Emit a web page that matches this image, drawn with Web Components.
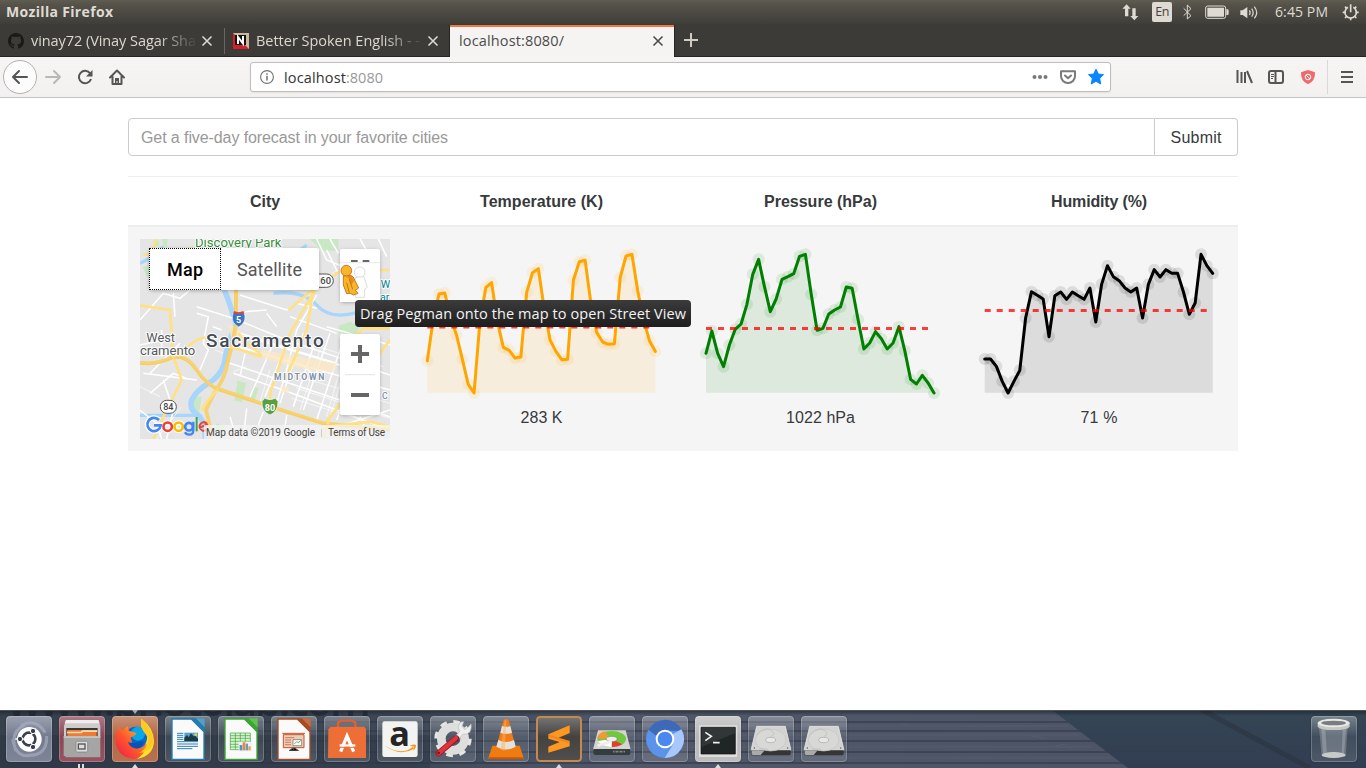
<!DOCTYPE html>
<html lang="en">
<head>
<meta charset="utf-8">
<title>localhost:8080/</title>
<style>
html,body{margin:0;height:100%;overflow:hidden;background:#fff}
</style>
</head>
<body>
<desk-top></desk-top>
<script>
function define(name, html, setup) {
  const tpl = document.createElement('template');
  tpl.innerHTML = html;
  customElements.define(name, class extends HTMLElement {
    constructor() {
      super();
      this.attachShadow({ mode: 'open' });
    }
    connectedCallback() {
      if (this.ready) return;
      this.ready = true;
      this.shadowRoot.append(tpl.content.cloneNode(true));
      if (setup) setup.call(this, this.shadowRoot);
    }
  });
}

/* A single line of text whose tracking is tuned to a given width. */
define('fit-text', `<style>:host{display:inline-block;white-space:pre;line-height:inherit}span{display:inline-block;white-space:pre}</style><span></span>`, function (root) {
  const s = root.querySelector('span');
  s.textContent = this.getAttribute('text');
  const want = +this.getAttribute('w');
  const have = s.getBoundingClientRect().width;
  s.style.letterSpacing = ((want - have) / (s.textContent.length - 1)).toFixed(3) + 'px';
  this.style.width = want + 'px';
});

/* ---------- system panel ---------- */
define('system-panel', `<style>
:host{display:flex;align-items:center;height:24px;padding:0 6px;background:linear-gradient(#5f5c50,#55524a 20%,#403e39);color:#dfdbd2;font:14.5px "Open Sans",sans-serif;box-sizing:border-box}
.t{font-weight:700;font-size:14px;line-height:22px;margin-top:-1px}
.r{margin-left:auto;display:flex;align-items:center;margin-right:-6px}
svg{display:block}
.en{width:20px;height:20px;border-radius:2px;background:#dfdbd2;color:#45433e;text-align:center;font:12.5px/20px "Open Sans",sans-serif;margin:0 9px 0 11px}
.c{margin:0 9px 0 14px;font-size:14px;line-height:22px}
</style>
<fit-text class="t" w="107" text="Mozilla Firefox"></fit-text>
<div class="r">
<svg width="20" height="24" viewBox="0 0 60 72" fill="#dfdbd2"><path d="M17 13 29 26H22V49H12V26H4ZM40 61 52 48H44V25H34V48H28Z"/></svg>
<div class="en"><fit-text w="14" text="En"></fit-text></div>
<svg width="13" height="24" viewBox="0 0 39 72" fill="none" stroke="#dfdbd2" stroke-width="3"><path d="M8 25 30 47 19 57V15L30 26 8 47"/></svg>
<svg width="26" height="24" viewBox="0 0 78 72" style="margin-left:10px"><rect x="5" y="18" width="60" height="37" rx="6" fill="none" stroke="#dfdbd2" stroke-width="3"/><path fill="#dfdbd2" d="M10 23H60V50H10ZM67 28h4q3 0 3 4v9q0 4-3 4h-4z"/></svg>
<svg width="22" height="24" viewBox="0 0 66 72" style="margin-left:9px" fill="none" stroke="#dfdbd2" stroke-width="3.5"><path fill="#dfdbd2" stroke="none" d="M4 31H11L25 21V55L11 45H4Z"/><path d="M31 31q5 7 0 14M38 26q9 12 0 24M46 20q14 18 0 35"/></svg>
<fit-text class="c" w="53" text="6:45 PM"></fit-text>
<svg width="26" height="24" viewBox="0 0 78 72" style="margin-right:3px" fill="none" stroke="#dfdbd2"><path stroke-width="5" d="M33 22A17 17 0 1 0 49 22M41 13V37"/><path stroke-width="5" d="M17 37h9M56 37h9M24 20l6 6M58 20l-6 6M24 54l6-6M58 54l-6-6M41 53v8"/></svg>
</div>`);

/* ---------- tabs ---------- */
define('tab-strip', `<style>
:host{display:flex;height:33px;padding-top:1px;box-sizing:border-box;background:#3c3b37;border-bottom:1px solid #262522;position:relative}
.tab{display:flex;align-items:center;width:225px;height:32px;box-sizing:border-box;color:#dcd8cf;font:14.5px/30px "Open Sans",sans-serif;position:relative;padding-left:8px}
.tab.sep{border-right:1px solid transparent;border-image:linear-gradient(transparent 4px,#69675f 4px,#69675f 28px,transparent 28px) 1}
.tab.on{width:226px;background:#f5f4f2;color:#4c4c4c;border:solid #262522;border-width:0 1px;margin-left:-1px;padding-left:9px;box-shadow:inset 0 2px #f07746}
.l{flex:1;white-space:nowrap;height:30px}
.f{-webkit-mask-image:linear-gradient(90deg,#000 76%,transparent 100%);mask-image:linear-gradient(90deg,#000 76%,transparent 100%)}
.i{margin-right:7px;flex:none}
.x{margin:0 11px 0 3px;stroke:currentColor;stroke-width:1.6;flex:none}
.p{margin:8px 0 0 9px}
</style>
<div class="tab sep"><svg class="i" width="16" height="16" viewBox="0 0 16 16"><path fill="#1b1a18" d="M8 0C3.58 0 0 3.58 0 8c0 3.54 2.29 6.53 5.47 7.59.4.07.55-.17.55-.38 0-.19-.01-.82-.01-1.49-2.01.37-2.53-.49-2.69-.94-.09-.23-.48-.94-.82-1.13-.28-.15-.68-.52-.01-.53.63-.01 1.08.58 1.23.82.72 1.21 1.87.87 2.33.66.07-.52.28-.87.51-1.07-1.78-.2-3.64-.89-3.64-3.95 0-.87.31-1.59.82-2.15-.08-.2-.36-1.02.08-2.12 0 0 .67-.21 2.2.82.64-.18 1.32-.27 2-.27s1.36.09 2 .27c1.53-1.04 2.2-.82 2.2-.82.44 1.1.16 1.92.08 2.12.51.56.82 1.27.82 2.15 0 3.07-1.87 3.75-3.65 3.95.29.25.54.73.54 1.48 0 1.07-.01 1.93-.01 2.2 0 .21.15.46.55.38A8.01 8.01 0 0 0 16 8c0-4.42-3.58-8-8-8z"/></svg>
<div class="l f"><fit-text w="165" text="vinay72 (Vinay Sagar Sha"></fit-text></div><svg class="x" width="12" height="12"><path d="M1.5 1.5 10.5 10.5M10.5 1.5 1.5 10.5"/></svg></div>
<div class="tab"><svg class="i" width="16" height="16" viewBox="0 0 16 16"><path fill="#cbb89c" d="M0 0H16V16H0Z"/><path fill="#d3202a" d="M0 0 16 16H0Z"/><path fill="#111" d="M2 2H13V12H2Z"/><path fill="none" stroke="#fff" stroke-width="2" d="M5 11V4L10 10.500V3"/></svg>
<div class="l f"><fit-text w="164" text="Better Spoken English - -"></fit-text></div><svg class="x" width="12" height="12"><path d="M1.500 1.500 10.500 10.500M10.500 1.500 1.500 10.500"/></svg></div>
<div class="tab on"><div class="l"><fit-text w="105" text="localhost:8080/"></fit-text></div><svg class="x" style="margin-right:10px" width="12" height="12"><path d="M1.500 1.500 10.500 10.500M10.500 1.500 1.500 10.500"/></svg></div>
<svg class="p" width="14" height="14"><path d="M7 0V14M0 7H14" stroke="#d0ccc3" stroke-width="2"/></svg>`);

/* ---------- navigation bar ---------- */
define('nav-bar', `<style>
:host{display:flex;align-items:center;height:41px;box-sizing:border-box;border-bottom:1px solid #c4c3c1;background:linear-gradient(#f6f5f4,#f2f1ef);padding:0 3px}
svg{display:block;flex:none}
.back{width:32px;height:32px;border:1px solid #b3b2b0;border-radius:50%;background:#fcfcfc;display:grid;place-items:center}
.url{margin-left:117px;width:861px;height:30px;box-sizing:border-box;border:1px solid #bfbebc;border-radius:3px;background:#fff;display:flex;align-items:center;box-shadow:0 1px 2px #0001;font:14.5px/29px "Open Sans",sans-serif;color:#333}
.g{color:#999}
.sp{flex:1}
.sep{width:1px;height:34px;background:#dad9d7;margin:0 3px}
</style>
<div class="back"><svg width="32" height="32" viewBox="0 0 32 32" fill="none" stroke="#555" stroke-width="2" stroke-linecap="round" stroke-linejoin="round"><path d="M23 16H9M15 10 9 16l6 6"/></svg></div>
<svg width="32" height="32" viewBox="0 0 32 32" fill="none" stroke="#b9b8b6" stroke-width="2" stroke-linecap="round" stroke-linejoin="round"><path d="M9 16H23M17 10 23 16l-6 6"/></svg>
<svg width="32" height="32" viewBox="0 0 32 32" fill="none" stroke="#555" stroke-width="2"><path d="M21.200 12.500A6.200 6.200 0 1 0 22 18"/><path d="M23.500 9V15.500H17Z" fill="#555" stroke="none"/></svg>
<svg width="32" height="32" viewBox="0 0 32 32"><path fill="none" stroke="#555" stroke-width="2" stroke-linecap="round" stroke-linejoin="round" d="M9 16.500 16 9.500 23 16.500M11.500 15.500V23H20.500V15.500"/><path fill="#555" d="M14 17h4v6h-1.500v-3h-1v3H14z"/></svg>
<div class="url">
<svg width="33" height="28" viewBox="0 0 33 28"><circle cx="16" cy="14" r="6.400" fill="none" stroke="#737373" stroke-width="1.100"/><path d="M16 12.800V17.500M16 10.300V11.700" stroke="#737373" stroke-width="1.500"/></svg>
<fit-text w="62" text="localhost"></fit-text><fit-text class="g" w="37" text=":8080"></fit-text><span class="sp"></span>
<svg width="28" height="28" fill="#777"><circle cx="8.500" cy="14" r="2"/><circle cx="14" cy="14" r="2"/><circle cx="19.500" cy="14" r="2"/></svg>
<svg width="28" height="28" fill="none" stroke="#7a7a7a" stroke-width="2" stroke-linejoin="round" stroke-linecap="round"><path d="M7 8.200H21V13A7 7 0 0 1 7 13Z"/><path d="M11 12.500 14 15.300 17 12.500"/></svg>
<svg width="28" height="28"><path fill="#0a84ff" stroke="#0a84ff" stroke-width="1" stroke-linejoin="round" d="M14 6.200 16.300 11 21.500 11.700 17.700 15.400 18.700 21 14 18.300 9.300 21 10.300 15.400 6.500 11.700 11.700 11Z"/></svg>
</div>
<span class="sp"></span>
<svg width="32" height="32" fill="none" stroke="#555" stroke-width="2"><path d="M9.500 9V22M13.500 11V22M17 11V22M19 10 24 22"/></svg>
<svg width="32" height="32" fill="none" stroke="#555" stroke-width="2"><rect x="9" y="10" width="14" height="12" rx="2"/><path d="M15.500 10V22"/><path stroke-width="1" d="M11 13.500h3M11 15.500h3M11 17.500h2"/></svg>
<svg width="32" height="32"><path fill="#f0696b" d="M16 9 23 11.200Q23.500 20 16 23.200Q8.500 20 9 11.200Z"/><circle cx="16" cy="16" r="2.800" fill="none" stroke="#fff" stroke-width="1"/><path d="M14 14l4 4" stroke="#fff"/></svg>
<div class="sep"></div>
<svg width="32" height="32" stroke="#555" stroke-width="2"><path d="M10 11H22M10 16H22M10 21H22"/></svg>`);

/* ---------- city map ---------- */
define('city-map', `<style>
:host{display:block;width:250px;height:200px;position:relative;font-family:Roboto,sans-serif}
.m{display:block;width:250px;height:200px}
.type{position:absolute;left:9px;top:9px;height:42px;display:flex;background:#fff;border-radius:2px;box-shadow:0 1px 4px -1px #0006;font-size:18px;line-height:43px}
.type div{box-sizing:border-box}
.on{width:72px;height:42px;border:1px dotted #000;padding-left:17px;font-weight:500;color:#000;line-height:41px}
.off{width:98px;padding-left:16px;color:#565656}
.fs,.zm{position:absolute;left:200px;width:40px;background:#fff;border-radius:2px;box-shadow:0 1px 4px -1px #0006}
.fs{top:10px;height:53px}
.zm{top:95px;height:81px}
.lg{position:absolute;right:0;bottom:0;height:14px;width:186px;background:#f5f5f5b8;font-size:10px;line-height:15px;color:#444;display:flex;justify-content:space-between;padding:0 5px 0 2px;box-sizing:border-box}
.lg i{width:1px;height:8px;margin:4px 0 0;background:#ccc}
text{font-family:Roboto,sans-serif}
</style>
<svg class="m" viewBox="30 27 750 600">
<rect x="30" y="27" width="750" height="600" fill="#e5e5e5"/>
<g fill="#c8e8c3"><path d="M38 110 58 108 60 138 50 140ZM70 32H88V48H74ZM96 27H112V50H100ZM560 45 540 27H625V62H575ZM625 288 660 275 690 290 680 310H625ZM322 452 348 458 336 516 314 512ZM370 470 386 474 374 512 360 510ZM192 500 215 500 205 565 185 545ZM260 580 285 590 280 612 252 602Z"/></g>
<path fill="none" stroke="#a8d5fb" stroke-width="16" d="M200 92Q270 150 285 185T318 285Q290 340 283 400Q270 440 235 460T185 510Q175 540 210 560Q228 590 225 627"/>
<path fill="none" stroke="#a8d5fb" stroke-width="10" d="M30 100 60 84 100 50M30 556H210M430 190Q520 180 560 225T680 248M470 80Q500 70 530 45"/>
<g fill="none" stroke="#fff" stroke-width="4.500"><path d="M30 270 100 190 150 205 180 180M60 490 130 430 170 445M110 627 130 540 100 450M95 300V380M200 250 235 260 220 340 235 360 210 420M248 290 275 300M200 230 310 265 470 330 780 435M330 195 470 240 500 220 560 235M560 195 500 300 470 420 440 520M325 350 600 430 780 480M330 310 620 400M300 400 420 440 780 560M345 370 330 440M430 340 360 500M470 340 405 500M520 310 450 520M560 320 490 530M600 310 520 540M640 330 560 570M680 390 620 570M380 330 640 408M310 430 460 480 780 600M480 260 620 310M590 60 625 130M590 290 780 345M640 585 780 540M650 600 700 627M690 560 720 627M350 535 340 627M470 555 460 627M400 545 385 585M300 560 320 627M40 430 200 450M30 540 80 580 95 627M560 27 590 90 640 110M600 27 625 70M690 27 715 70M745 27 770 80M635 310 650 350M510 400 560 440M30 345 100 330M60 430 150 340M130 190 135 260M410 250 440 290M345 245 410 240"/></g>
<g fill="none" stroke="#fff" stroke-width="2"><path d="M500 475 780 565M485 505 760 590M505 440 780 520M420 420 390 515M350 410 310 425M545 345 760 410M620 120 520 210M255 360 280 370M650 350 590 560M60 130 110 180M30 470 90 500M80 627 155 530M640 430 600 560M570 360 510 540"/></g>
<path fill="#fbe9c6" d="M395 360 620 400 610 425 540 420 395 385ZM295 285 320 290 340 320 305 330ZM455 470h22v18h-22z" opacity=".8"/>
<g fill="none" stroke="#f5d375" stroke-width="12" stroke-linejoin="round"><path d="M318 170V285L308 340 292 400Q285 440 265 470T228 540L240 590V627M30 398Q80 405 130 380Q170 375 200 420T265 477Q420 530 580 580L780 600"/></g>
<g fill="none" stroke="#ffe082" stroke-width="8" stroke-linejoin="round"><path d="M30 226 120 240 130 380 155 450 110 540 70 627M130 380 200 330 225 322M325 310 345 335 395 375M300 350 395 380M555 180 480 310 420 490 420 540M465 450 530 300 550 180 620 130 640 120M475 240 560 170M590 575 780 330M600 560 580 627M660 335 700 295H780M80 80Q60 60 80 27M40 75 190 55M600 600 640 627M590 590 720 575 780 590M740 120H780M215 540Q240 500 265 477"/></g>
<g fill="none" stroke="#f8c94e" stroke-width="2"><path d="M314 170V285L303 340 287 400M320 170V287M30 402Q80 409 130 384Q170 379 200 424T265 480Q420 534 580 583L780 603"/></g>
<g stroke="#fff" stroke-width="6" stroke-linejoin="round" paint-order="stroke">
<text x="195" y="51" font-size="37" fill="#388e3c" textLength="259" lengthAdjust="spacingAndGlyphs">Discovery Park</text>
<text x="228" y="350" font-size="57" fill="#434a54" font-weight="500" textLength="353">Sacramento</text>
<text x="49" y="335" font-size="37" fill="#54585c" textLength="86" lengthAdjust="spacingAndGlyphs">West</text>
<text x="30" y="375" font-size="37" fill="#54585c" textLength="166" lengthAdjust="spacingAndGlyphs">cramento</text>
<text x="432" y="449" font-size="26" fill="#8090a8" font-weight="700" textLength="151">MIDTOWN</text>
<text x="756" y="506" font-size="26" fill="#8090a8" font-weight="500">C</text><text x="752" y="174" font-size="32" fill="#00838f">W</text><text x="750" y="213" font-size="32" fill="#00838f">ar</text></g>
<g font-weight="500" text-anchor="middle"><rect x="540" y="132" width="70" height="40" rx="20" fill="#fff" stroke="#555" stroke-width="3"/><text x="587" y="162" font-size="28" fill="#444">60</text>
<rect x="91" y="511" width="48" height="39" rx="19" fill="#fff" stroke="#555" stroke-width="3"/><text x="115" y="540" font-size="27" fill="#444">84</text>
<path fill="#3d72c4" stroke="#fff" stroke-width="2" d="M307 257 312 245Q326 252 340 245L345 257Q347 280 326 291Q304 280 307 257Z"/><path fill="#d54542" d="M309 251 312 243Q326 250 340 243L343 251Z"/><text x="326" y="280" font-size="27" fill="#fff" font-weight="700">5</text>
<path fill="#5a9e42" stroke="#fff" stroke-width="2" d="M396 514 404 505Q420 513 436 505L444 514Q445 545 420 555Q394 545 396 514Z"/><text x="420" y="543" font-size="27" fill="#fff" font-weight="700">80</text></g>
<g fill="none" stroke-width="8"><g stroke="#fff" stroke-width="15"><circle cx="113" cy="590" r="12"/><circle cx="146" cy="590" r="12"/><path d="M87 570A20 20 0 1 0 92 585H72"/></g>
<path stroke="#4285f4" d="M87 570A20 20 0 1 0 92 586H72"/><circle cx="113" cy="590" r="12.500" stroke="#ea4335"/><circle cx="146" cy="590" r="12.500" stroke="#fbbc05"/><circle cx="177" cy="590" r="11.500" stroke="#4285f4"/><path stroke="#4285f4" stroke-width="7" d="M190 575V600Q190 614 178 614Q168 614 165 607"/><path stroke="#34a853" stroke-width="6" d="M200 561V604"/><path stroke="#ea4335" stroke-width="6" d="M209 593 231 584Q227 574 218 577Q207 582 209 593Q216 608 232 599"/></g>
</svg>
<div class="lg"><fit-text w="109" text="Map data ©2019 Google"></fit-text><i></i><fit-text w="57" text="Terms of Use"></fit-text></div>
<div class="type"><div class="on"><fit-text w="36" text="Map"></fit-text></div><div class="off"><fit-text w="65" text="Satellite"></fit-text></div></div>
<div class="fs"><svg width="40" height="53" viewBox="630 57 120 159"><path d="M663 93H683M698 93H718" stroke="#666" stroke-width="6"/><path d="M630 99H750V216H630Z" fill="#fff"/><path d="M630 98H750" stroke="#ddd" stroke-width="2"/><g fill="#fff" stroke="#dcdcdc" stroke-width="3"><circle cx="689" cy="127" r="16"/><path d="M677 142 702 140 712 172 704 177V202H677L670 165Z"/></g></svg></div>
<svg style="position:absolute;left:200px;top:24px" width="22" height="42" viewBox="630 99 66 126"><g stroke="#b56a19" stroke-width="2.500" fill="#f9b526"><path d="M640 137 662 136Q671 138 675 152L686 174 676 181 684 190 671 195 660 190 650 191 640 165Z"/><circle cx="649" cy="122" r="16"/><path fill="#e88a20" stroke="none" d="M642 138 665 137 672 153 664 164 656 144Z"/><path fill="none" d="M658 148 668 178M650 158 658 188"/></g></svg>
<div class="zm"><svg width="40" height="81" viewBox="0 0 120 243"><path d="M33 60H87M60 33V87M33 183H87" stroke="#666" stroke-width="12"/><path d="M15 122H105" stroke="#e4e4e4" stroke-width="3"/></svg></div>`);

/* ---------- sparkline ---------- */
define('spark-chart', `<style>
:host{display:flex;flex-direction:column;align-items:center;padding-top:4px;color:#373a3c}
svg{display:block}
.v{line-height:24px;margin-top:2px}
</style><svg width="250" height="161"></svg><div class="v"><slot></slot></div>`, function (root) {
  const color = this.getAttribute('color');
  const ys = this.getAttribute('points').split(' ').map(v => (v / 3 - 13));
  const step = 228 / 39;
  const left = +this.getAttribute('left');
  const pts = ys.map((y, i) => [(left + i * step).toFixed(2), y.toFixed(2)]);
  const line = pts.map(p => p.join(' ')).join(' ');
  const ref = this.getAttribute('mean') / 3 - 13;
  root.querySelector('svg').innerHTML =
    `<polygon points="${left} 149.700 ${line} ${left + 228} 149.700" fill="${color}" fill-opacity=".1"/>` +
    `<polyline points="${line}" fill="none" stroke="${color}" stroke-width="3" stroke-linecap="round" stroke-linejoin="round"/>` +
    `<g fill="${color}" fill-opacity=".1">${pts.map(p => `<circle cx="${p[0]}" cy="${p[1]}" r="6"/>`).join('')}</g>` +
    `<path d="M${left} ${ref}h228" stroke="red" stroke-opacity=".75" stroke-width="3" stroke-dasharray="6 6"/>`;
});

/* ---------- the page ---------- */
define('forecast-page', `<style>
:host{display:block;position:relative;width:1110px;margin:0 auto;padding-top:20px;font:16px/24px "Liberation Sans",Arial,sans-serif;color:#373a3c}
form{display:flex;height:38px;margin:0 0 20px}
.in{flex:1;box-sizing:border-box;border:1px solid #ccc;border-radius:4px 0 0 4px;padding:7px 12px 5px;color:#999}
.b{width:83px;box-sizing:border-box;border:1px solid #ccc;border-left:0;border-radius:0 4px 4px 0;padding:7px 0 5px;text-align:center}
.row{display:grid;grid-template-columns:274px 279px 279px 278px}
.h{border-top:1px solid #eceeef;border-bottom:2px solid #eceeef;height:46px;padding-top:2px;align-items:center;text-align:center;font-weight:700}
.d{background:#f5f5f5;height:224px}
city-map{margin:12px 0 0 12px}
spark-chart{margin-top:12px}
.tip{position:absolute;left:227px;top:202px;width:336px;height:27px;box-sizing:border-box;border-radius:4px;background:linear-gradient(#3b3b3b,#1e1e1e);color:#f3f3f3;font:14.5px/27px "Open Sans",sans-serif;padding-left:5px}
</style>
<form><div class="in"><fit-text w="307" text="Get a five-day forecast in your favorite cities"></fit-text></div><div class="b"><fit-text w="51" text="Submit"></fit-text></div></form>
<div class="row h"><div><fit-text w="30" text="City"></fit-text></div><div><fit-text w="123" text="Temperature (K)"></fit-text></div><div><fit-text w="113" text="Pressure (hPa)"></fit-text></div><div><fit-text w="96" text="Humidity (%)"></fit-text></div></div>
<div class="row d"><city-map></city-map>
<spark-chart color="orange" left="10.300" mean="291" points="392 270 192 189 265 315 388 463 489 275 173 158 275 352 361 384 381 187 128 116 236 330 364 389 388 150 95 91 222 308 336 343 341 142 78 73 183 270 332 364"><fit-text w="42" text="283 K"></fit-text></spark-chart>
<spark-chart color="green" left="10" mean="295.500" points="370 303 370 410 345 298 282 223 133 88 170 245 207 148 140 131 79 73 193 301 295 252 240 231 171 175 268 357 339 305 326 357 339 290 362 448 462 436 459 489"><fit-text w="69" text="1022 hPa"></fit-text></spark-chart>
<spark-chart color="black" left="10.700" mean="241.500" points="387 387 409 454 489 454 421 264 185 196 207 320 197 186 208 186 197 208 174 276 163 107 140 152 174 186 174 264 163 119 141 119 130 130 186 253 219 73 107 130"><fit-text w="37" text="71 %"></fit-text></spark-chart></div>
<div class="tip"><fit-text w="326" text="Drag Pegman onto the map to open Street View"></fit-text></div>`);

/* ---------- dock ---------- */
define('dock-tile', `<style>
:host{display:block;position:relative;width:46px;height:46px;border-radius:4px;box-sizing:border-box;background:linear-gradient(#fff5,#fff1 45%,#fff2),var(--c,transparent);box-shadow:inset 0 0 0 1px #ffffff38,0 0 2px #0005}
::slotted(svg){display:block;width:46px;height:46px}
:host([run])::after{content:"";position:absolute;left:20px;bottom:-6px;border:solid transparent;border-width:0 3.500px 4px;border-bottom-color:#dedede}
:host([two])::after{content:"";position:absolute;left:19px;bottom:-6px;width:2px;height:4px;border:solid #dedede;border-width:0 2px}
:host([focus])::before{content:"";position:absolute;left:20px;top:-6px;border:solid transparent;border-width:4px 3.500px 0;border-top-color:#aaa}
</style><slot></slot>`);

const sheet = (c, l, body) => `<svg viewBox="0 0 138 138"><path fill="#fafafa" stroke="${c}" stroke-width="4" d="M21 9H79L117 47V130H21Z"/><path fill="${c}" d="M77 7H119V48Z"/><path fill="${l}" d="M92 7H119V34Z" opacity=".6"/>${body}</svg>`;
const drive = `<svg viewBox="0 0 138 138"><path fill="#d3d3d1" stroke="#f2f2f0" stroke-width="2" d="M26 31H112L128 98V103H10V98Z"/><path fill="#353535" d="M10 103H128V113Q128 118 122 118H15Q10 118 10 113Z"/><path fill="#aaa" d="M11 103H50L38 117H15Q11 117 11 112Z"/><ellipse cx="68" cy="72" rx="46" ry="33" fill="#d8d8d6" stroke="#c3c3c1" stroke-width="2"/><ellipse cx="68" cy="72" rx="15" ry="8" fill="#e8e8e6" stroke="#a5a5a5" stroke-width="2"/><path d="M26 58Q35 42 58 38Q92 50 68 62M60 100Q35 95 30 104" fill="none" stroke="#b9b9b7" stroke-width="2"/><circle cx="19" cy="96" r="2" fill="#555"/><circle cx="119" cy="96" r="2" fill="#555"/></svg>`;

define('launcher-dock', `<style>
:host{display:block;position:relative;height:58px;overflow:hidden;background:#3a4350}
.bg{position:absolute;inset:0;width:1366px;height:58px}
.row{position:relative;display:flex;gap:7px;padding:6px 9px 0 6px}
.end{margin-left:auto}
</style>
<svg class="bg" viewBox="0 0 1366 58"><defs><linearGradient id="w" x2="1" y2="0"><stop offset="0" stop-color="#363f4c"/><stop offset=".3" stop-color="#3d4958"/><stop offset=".45" stop-color="#50586a"/><stop offset="1" stop-color="#4a5263"/></linearGradient><linearGradient id="n" x2="0" y2="1"><stop offset="0" stop-color="#344654"/><stop offset="1" stop-color="#323d51"/></linearGradient><filter id="b" filterUnits="userSpaceOnUse" x="0" y="-10" width="1366" height="80"><feGaussianBlur stdDeviation=".7"/></filter><linearGradient id="s" x2="0" y2="1"><stop stop-color="#151a20" stop-opacity=".6"/><stop offset="1" stop-color="#151a20" stop-opacity="0"/></linearGradient></defs>
<path fill="url(#w)" d="M0 0H1366V58H0Z"/><path fill="#252e3b" opacity=".35" d="M0 25H430V58H0Z"/>
<g stroke="#313746" stroke-width="1" opacity=".7" filter="url(#b)"><path stroke-width="1.500" d="M230 12H1080M230 21H1085M230 31H1095M230 42H1115M230 53H1130"/></g><g stroke="#737b8c" stroke-width="1" opacity=".2"><path d="M600 5H1056M620 16H1068M600 25H1080M600 37H1092M640 48H1110M902 14h6M1032 26l12 2M1056 36l10-2"/></g>
<path fill="url(#n)" d="M1052 0H1366V58H1128Z"/><path d="M1202 0 1310 58" stroke="#29313e" stroke-width="5" opacity=".5" filter="url(#b)"/><path fill="url(#s)" d="M0 0H1366V6H0Z"/><text x="7" y="6" font-family="Open Sans,sans-serif" font-weight="600" font-size="43" fill="#18222e" opacity=".6" textLength="364">www.photolab.com</text><path stroke="#4d5153" d="M0 .5H1366"/></svg>
<div class="row">
<dock-tile style="--c:#6a7288"><svg viewBox="0 0 138 138"><g fill="none" stroke="#aeb4c4" stroke-width="9" opacity=".6"><path d="M30 105Q8 50 58 25M45 28Q90 5 118 50M65 118Q125 120 122 60M20 70Q30 130 80 117"/></g><circle cx="70" cy="70" r="37" fill="#fff"/><circle cx="69" cy="69" r="19" fill="none" stroke="#3a4052" stroke-width="8"/><path d="M69 69 88 36M69 69H28M69 69 88 102" stroke="#fff" stroke-width="4"/><circle cx="69" cy="69" r="14" fill="#fff"/><g fill="#3a4052" stroke="#fff" stroke-width="3"><circle cx="81" cy="45" r="8"/><circle cx="42" cy="69" r="8"/><circle cx="81" cy="93" r="8"/></g></svg></dock-tile>
<dock-tile two style="--c:#84394a"><svg viewBox="0 0 138 138"><path fill="#ccc" d="M21 12H118L124 30V64H15V30Z"/><path fill="#eee" d="M21 12H118L122 22H17Z"/><path fill="#40352f" d="M22 36H116V60H22Z"/><path fill="#ed7c32" d="M25 42H113V60H25Z"/><path fill="#f7dfc0" d="M24 47H65L70 43H115V48H72L68 52H24Z"/><path fill="#a5a5a3" d="M14 61H124V124H19V120H14Z"/><path fill="#c4c4c2" d="M14 61H124V66H14Z"/><rect x="51" y="76" width="35" height="32" rx="4" fill="#ddd" stroke="#777" stroke-width="2"/><rect x="58" y="84" width="20" height="15" fill="#ddd" stroke="#555" stroke-width="4"/></svg></dock-tile>
<dock-tile run focus style="--c:#ad5c35"><svg viewBox="0 0 138 138"><defs><linearGradient id="f" x1="0" y1="1" x2="1" y2="0"><stop stop-color="#ec164f"/><stop offset=".45" stop-color="#ff552c"/><stop offset="1" stop-color="#ffd02e"/></linearGradient></defs><path fill="#f9e12b" d="M88 8Q126 36 126 76Q124 120 75 129Q110 100 98 60Q84 35 88 8Z"/><circle cx="72" cy="65" r="33" fill="#0868ce"/><circle cx="78" cy="53" r="21" fill="#08a7e6"/><path fill="url(#f)" d="M22 30Q26 42 34 46 36 35 48 30L50 44 73 51Q70 60 57 64 54 70 60 74 53 91 74 97 93 98 106 82 98 121 69 129 22 126 12 84 9 54 22 30Z"/><path fill="#0753b6" d="M48 78Q68 87 80 76L96 77Q88 101 68 97 52 92 48 78Z"/><path fill="#ffca22" d="M88 8Q84 35 98 51T106 82Q100 103 79 112 112 111 126 79 121 35 88 8Z"/></svg></dock-tile>
<dock-tile>${sheet('#247cac', '#74b7dc', '<path stroke="#2f80b5" stroke-width="3" d="M36 52H55M36 58H55M36 64H55M36 70H55M36 77H99M36 84H99M36 91H99M36 98H82"/><path fill="#4fa4d4" d="M58 50H99V75H58Z"/><path fill="#1d3b42" d="M58 75V65L66 57 71 64 78 52 86 61 91 60 99 68V75Z"/><circle cx="92" cy="56" r="4" fill="#ffcf36"/>')}</dock-tile>
<dock-tile>${sheet('#3ca633', '#7ad668', '<path fill="#d9f3d5" stroke="#3da334" stroke-width="2" d="M37 51H97V101H37ZM37 59H97M37 67H97M37 76H97M37 85H97M37 93H97M52 51V101M67 51V101M82 51V101"/><path fill="#eef3ee" d="M62 77H102V106H62Z"/><path fill="#5093c5" d="M65 87h8v16h-8z"/><path fill="#eb8640" d="M74 79h8v24h-8z"/><path fill="#6b99c2" d="M83 83h7v20h-7z"/><path fill="#e8a34a" d="M91 91h7v12h-7z"/>')}</dock-tile>
<dock-tile>${sheet('#a64b25', '#d9855c', '<path fill="#f2ccb8" stroke="#c1532c" stroke-width="3" d="M37 56H99V95H37ZM34 52H102"/><path stroke="#b85935" stroke-width="2" d="M42 65H70M42 72H60M42 79H60M42 86H60"/><path fill="#fff" stroke="#427c54" stroke-width="2" d="M66 71H92V89H66ZM70 84 77 77 82 80 90 73"/><path stroke="#555" stroke-width="3" d="M54 104 66 96H71L83 104M68 96V102"/>')}</dock-tile>
<dock-tile><svg viewBox="0 0 138 138"><path fill="none" stroke="#e75d2c" stroke-width="7" d="M42 43V20L51 14H85L94 20V43"/><path fill="#ed6e36" d="M13 40 20 32H121L126 40V126H12Z"/><path fill="none" stroke="#fff" stroke-width="10" d="M50 107 69 60 89 107"/><path fill="#fff" d="M47 85H94V92H47Z"/><path stroke="#ed6e36" stroke-width="3" d="M44 94H96"/></svg></dock-tile>
<dock-tile><svg viewBox="0 0 138 138"><rect x="16" y="16" width="106" height="107" rx="7" fill="#f3f3f1"/><text x="68" y="89" text-anchor="middle" font-family="Open Sans,sans-serif" font-weight="700" font-size="103" fill="#252525">a</text><path fill="#f39a24" d="M22 88Q72 121 108 92L111 98Q68 124 22 88ZM98 89Q114 82 117 88Q118 95 108 106 112 94 111 92Z"/></svg></dock-tile>
<dock-tile><svg viewBox="0 0 138 138"><circle cx="69" cy="68" r="49" fill="none" stroke="#e6e6e4" stroke-width="14" stroke-dasharray="19.200 19.200"/><circle cx="69" cy="68" r="35" fill="none" stroke="#dededc" stroke-width="26"/><path fill="#eee" stroke="#bbb" stroke-width="2" d="M76 61 90 45Q80 33 92 18L101 17 96 31 104 41 116 32 123 24Q127 47 110 54L98 55 85 72Z"/><path stroke="#9e151e" stroke-width="18" stroke-linecap="round" d="M26 112 79 67"/><path stroke="#df343f" stroke-width="13" stroke-linecap="round" d="M26 112 78 66"/><circle cx="26" cy="111" r="4" fill="#861018"/></svg></dock-tile>
<dock-tile><svg viewBox="0 0 138 138"><path fill="#f07c10" d="M28 89H110L123 129H15Z"/><path fill="#c85706" d="M17 124H121L123 130H15Z"/><path fill="#f47c17" d="M62 12Q70 6 77 12L98 94Q70 114 40 94Z"/><path fill="#e2e2df" d="M57 30Q70 35 82 30L87 50Q69 57 52 50ZM46 72Q70 84 93 72L98 92Q70 109 40 92Z"/><path fill="#ffb35b" opacity=".5" d="M65 13 70 12 65 105 53 101Z"/></svg></dock-tile>
<dock-tile run style="--c:#373533;box-shadow:inset 0 0 0 2px #c58a4b"><svg viewBox="0 0 138 138"><path fill="#ff9720" d="M37 55 101 28V51L68 65 101 75V91L37 110V92L71 78 37 68Z"/><path fill="#dc761b" d="M37 55 101 75V82L37 62Z" opacity=".45"/></svg></dock-tile>
<dock-tile><svg viewBox="0 0 138 138"><path fill="#d4d4d2" d="M27 43H110L124 97V103H13V97Z"/><path fill="#333d40" d="M13 99H124V112Q124 117 118 117H19Q13 117 13 110Z"/><ellipse cx="68" cy="69" rx="43" ry="24" fill="#70c93c"/><path fill="#ef9a34" d="M68 69 25 68Q28 50 46 46Z"/><path fill="#ec3936" d="M68 69 100 85Q86 94 68 93Z"/><path fill="#fff" d="M68 69V93Q35 92 26 75Z"/><ellipse cx="68" cy="69" rx="17" ry="8" fill="#eee" stroke="#679449" stroke-width="2"/><path stroke="#eee" stroke-width="8" stroke-linecap="round" d="M29 88 65 77"/><path stroke="#aaa" stroke-width="5" stroke-dasharray="2 2" d="M73 107H108"/></svg></dock-tile>
<dock-tile><svg viewBox="0 0 138 138"><circle cx="69" cy="69" r="57" fill="#5c93ea"/><path fill="#3e69b6" d="M19 41A57 57 0 0 1 121 44H69L43 60Z"/><path fill="#a8c7fb" d="M118 40A57 57 0 0 1 68 126L94 83 93 54Z"/><circle cx="69" cy="69" r="28" fill="#fff"/><circle cx="69" cy="69" r="22" fill="#4a88f0"/></svg></dock-tile>
<dock-tile run style="--c:#b3b4b3"><svg viewBox="0 0 138 138"><path fill="#dededc" d="M12 28H127V123H12Z"/><path fill="#202526" stroke="#111" stroke-width="2" d="M18 34H121V114H18Z"/><path fill="#fff" opacity=".08" d="M19 35H120V52L19 93Z"/><path fill="none" stroke="#eee" stroke-width="5" d="M31 49 49 61 31 74M54 80H74"/></svg></dock-tile>
<dock-tile>${drive}</dock-tile><dock-tile>${drive}</dock-tile>
<dock-tile class="end"><svg viewBox="0 0 138 138"><path fill="#a4abae" opacity=".4" d="M24 34H110L104 120Q69 131 32 120Z"/><path fill="#fff" opacity=".2" d="M31 40H43L48 116 36 114ZM95 40H105L99 113 92 116Z"/><ellipse cx="68" cy="117" rx="36" ry="9" fill="#c8cbc5"/><path fill="#c6c8c2" d="M20 20H116V32Q110 42 68 42T20 32Z"/><ellipse cx="68" cy="21" rx="48" ry="13" fill="#e8e9e4"/><ellipse cx="68" cy="21" rx="37" ry="7" fill="#777d80"/></svg></dock-tile>
</div>`);

define('desk-top', `<style>
:host{display:flex;flex-direction:column;width:1366px;height:768px;overflow:hidden;background:#fff}
main{flex:1;min-height:0}
</style><system-panel></system-panel><tab-strip></tab-strip><nav-bar></nav-bar><main><forecast-page></forecast-page></main><launcher-dock></launcher-dock>`);
</script>
</body>
</html>
